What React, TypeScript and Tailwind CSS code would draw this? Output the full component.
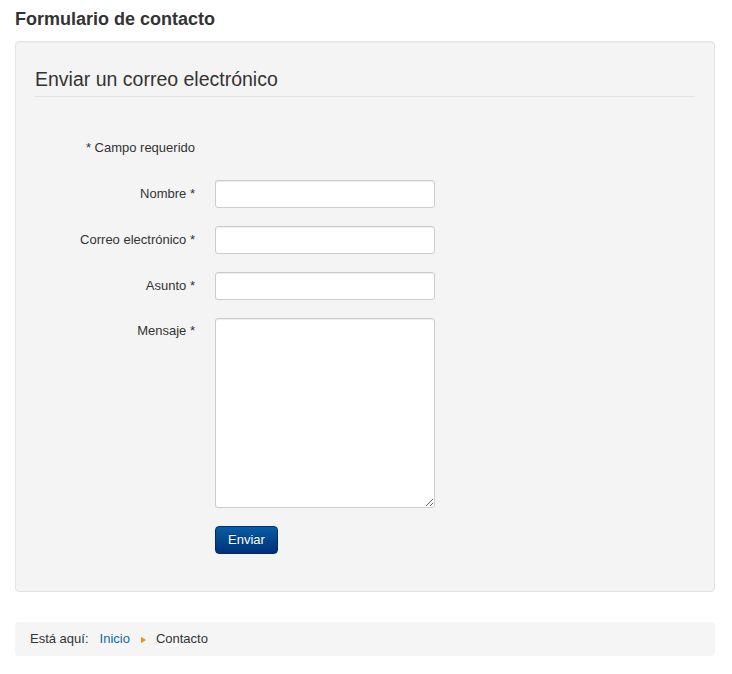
import React from 'react';

const font = { fontFamily: '"Liberation Sans", Arial, sans-serif' };

function Field({ label, children, top }: { label: string; children: React.ReactNode; top?: boolean }) {
  return (
    <div className={`flex ${top ? 'items-start' : 'items-center'} gap-[20px]`}>
      <label className={`w-[160px] shrink-0 text-right text-[13px] leading-[18px] text-[#333] ${top ? 'pt-[4px]' : ''}`}>
        {label}
      </label>
      {children}
    </div>
  );
}

export default function App() {
  return (
    <div style={font} className="min-h-[674px] w-[732px] bg-white px-[15px] text-[#333]">
      <div className="w-[700px]">
        <h1 className="pt-[7px] text-[18px] font-bold leading-[24px] text-[#333]">Formulario de contacto</h1>

        <div className="mt-[10px] rounded-[4px] border border-[#e3e3e3] bg-[#f4f4f4] px-[19px] pb-[37px] shadow-[inset_0_1px_1px_rgba(0,0,0,0.03)]">
          <h2 className="border-b border-[#e2e2e2] pt-[25px] pb-[5px] text-[19.5px] leading-[24px] text-[#333]">
            Enviar un correo electrónico
          </h2>

          <div className="mt-[42px] flex flex-col">
            <Field label="* Campo requerido">
              <span />
            </Field>

            <div className="mt-[23px] flex flex-col gap-[18px]">
              <Field label="Nombre *">
                <input className="h-[28px] w-[220px] rounded-[3px] border border-[#ccc] bg-white shadow-[inset_0_1px_1px_rgba(0,0,0,0.075)] outline-none" />
              </Field>
              <Field label="Correo electrónico *">
                <input className="h-[28px] w-[220px] rounded-[3px] border border-[#ccc] bg-white shadow-[inset_0_1px_1px_rgba(0,0,0,0.075)] outline-none" />
              </Field>
              <Field label="Asunto *">
                <input className="h-[28px] w-[220px] rounded-[3px] border border-[#ccc] bg-white shadow-[inset_0_1px_1px_rgba(0,0,0,0.075)] outline-none" />
              </Field>
              <Field label="Mensaje *" top>
                <textarea className="block h-[190px] w-[220px] rounded-[3px] border border-[#ccc] bg-white shadow-[inset_0_1px_1px_rgba(0,0,0,0.075)] outline-none" />
              </Field>
              <div className="pl-[180px]">
                <button className="h-[28px] w-[63px] rounded-[4px] border border-[#022a72] bg-gradient-to-b from-[#0a5ea3] to-[#00307a] text-[13px] text-white [text-shadow:0_-1px_0_rgba(0,0,0,0.25)]">
                  Enviar
                </button>
              </div>
            </div>
          </div>
        </div>

        <div className="mt-[30px] flex h-[34px] items-center rounded-[4px] bg-[#f5f5f5] px-[15px] text-[13px] text-[#333]">
          <span>Está aquí:</span>
          <a className="ml-[11px] text-[#0e6aa8]">Inicio</a>
          <span className="ml-[11px] mr-[10px] inline-block h-0 w-0 translate-y-[1px] border-y-[3.5px] border-l-[5px] border-y-transparent border-l-[#f08a10]" />
          <span>Contacto</span>
        </div>
      </div>
    </div>
  );
}
